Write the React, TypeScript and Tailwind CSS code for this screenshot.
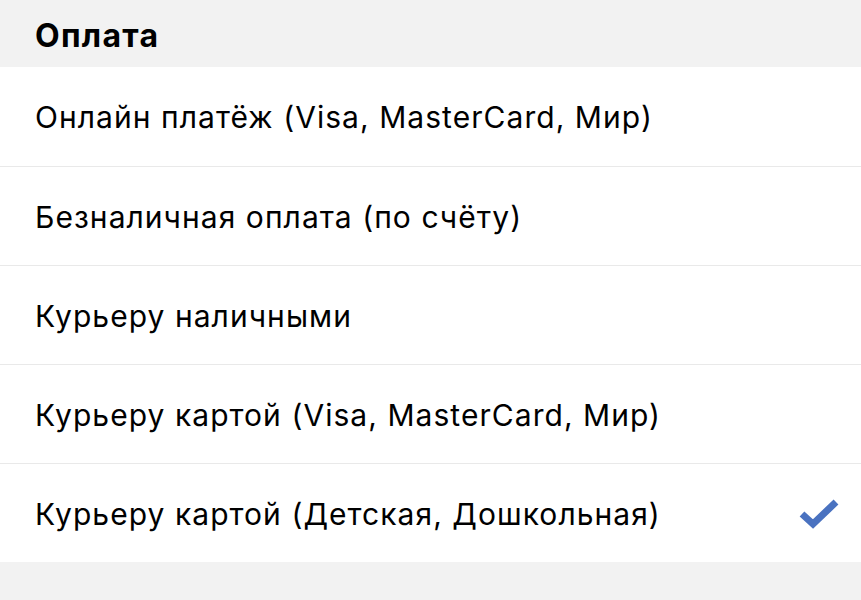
const options = [
  "Онлайн платёж (Visa, MasterCard, Мир)",
  "Безналичная оплата (по счёту)",
  "Курьеру наличными",
  "Курьеру картой (Visa, MasterCard, Мир)",
  "Курьеру картой (Детская, Дошкольная)",
];

function Check() {
  return (
    <svg width="40" height="32" viewBox="0 0 40 32" className="shrink-0">
      <path d="M3 17 L14 27 L37 5" fill="none" stroke="#4a72c0" strokeWidth="7" strokeLinejoin="miter" />
    </svg>
  );
}

export default function App() {
  const selected = 4;
  return (
    <div className="min-h-[600px] bg-[#f2f2f2] text-black" style={{ fontFamily: "Inter, 'Noto Sans', sans-serif" }}>
      {/* Section title */}
      <div className="flex h-[67px] items-center px-[35px] pt-[5px]">
        <h2 className="text-[32px] font-bold tracking-[0.04em]">Оплата</h2>
      </div>

      <ul className="bg-white">
        {options.map((label, i) => (
          <li
            key={label}
            className={`flex h-[99px] items-center justify-between pl-[35px] pr-[22px] ${i > 0 ? "border-t border-[#e9e9e9]" : ""}`}
          >
            <span className="pt-[2px] text-[30px] tracking-[0.035em]">{label}</span>
            {i === selected && <Check />}
          </li>
        ))}
      </ul>
    </div>
  );
}
